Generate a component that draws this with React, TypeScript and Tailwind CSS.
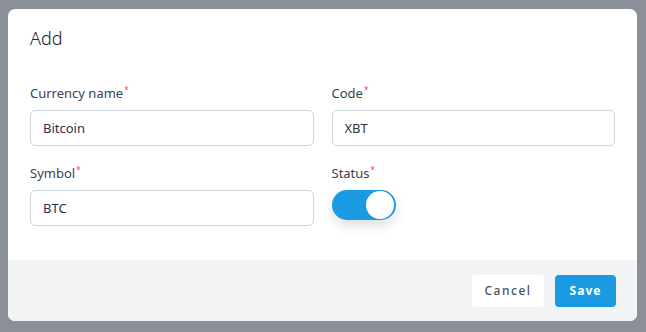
import React, { useState } from 'react';

const font = { fontFamily: '"Noto Sans", "Open Sans", sans-serif' };

function Req() {
    return <sup className="text-[#ef4444] text-[8px] ml-[1px] relative -top-[5px]">*</sup>;
}

function Field({ label, value }: { label: string; value: string }) {
    return (
        <div className="flex flex-col">
            <label className="text-[13px] text-[#3b4350] leading-[18px] mb-[8px]">
                {label}
                <Req />
            </label>
            <input
                defaultValue={value}
                className="h-[36px] w-full rounded-[5px] border border-[#cdd5e0] bg-white px-[12px] text-[13px] text-[#2d3440] outline-none"
            />
        </div>
    );
}

export default function App() {
    const [enabled, setEnabled] = useState(true);

    return (
        <div className="w-[646px] h-[332px] bg-[#8a8f98] pl-[8px] pt-[9px]" style={font}>
            <div className="w-[629px] h-[312px] bg-white rounded-[7px] overflow-hidden flex flex-col">
                <div className="flex-1 px-[22px] pt-[17px]">
                    <h2 className="text-[18px] font-light text-[#222] leading-[24px]">Add</h2>

                    <div className="grid grid-cols-2 gap-x-[18px] gap-y-[18px] mt-[34px]">
                        <Field label="Currency name" value="Bitcoin" />
                        <Field label="Code" value="XBT" />
                        <Field label="Symbol" value="BTC" />

                        <div className="flex flex-col">
                            <label className="text-[13px] text-[#3b4350] leading-[18px] mb-[8px]">
                                Status
                                <Req />
                            </label>
                            <button
                                onClick={() => setEnabled(!enabled)}
                                className="relative w-[64px] h-[30px] rounded-full bg-[#1b9ae4] shadow-[0_6px_12px_rgba(0,0,0,0.12)]"
                            >
                                <span className="absolute right-[2px] top-[1px] w-[28px] h-[28px] rounded-full bg-white" />
                            </button>
                        </div>
                    </div>
                </div>

                <div className="h-[61px] bg-[#f2f3f5] flex items-center justify-end gap-[11px] px-[21px]">
                    <button className="h-[32px] w-[72px] rounded-[4px] bg-white text-[12px] tracking-[1.5px] text-[#4a5260] font-medium">
                        Cancel
                    </button>
                    <button className="h-[32px] w-[61px] rounded-[4px] bg-[#1b9ae4] text-[12px] tracking-[1px] text-white font-bold">
                        Save
                    </button>
                </div>
            </div>
        </div>
    );
}
